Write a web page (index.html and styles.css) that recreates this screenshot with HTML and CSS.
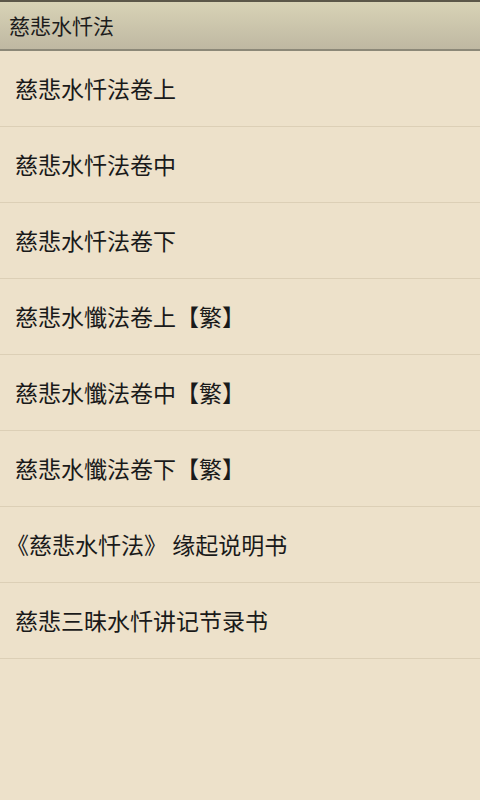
FILE: index.html
```html
<!DOCTYPE html>
<html>
	<head>
		<title>慈悲水忏法</title>
		<link rel="stylesheet" href="styles.css">
	</head>
	<body>
		<div class="titlebar">慈悲水忏法</div>
		<ul class="list">
			<li>慈悲水忏法卷上</li>
			<li>慈悲水忏法卷中</li>
			<li>慈悲水忏法卷下</li>
			<li>慈悲水懺法卷上【繁】</li>
			<li>慈悲水懺法卷中【繁】</li>
			<li>慈悲水懺法卷下【繁】</li>
			<li class="quote">《慈悲水忏法》 缘起说明书</li>
			<li>慈悲三昧水忏讲记节录书</li>
		</ul>
	</body>
</html>
```

FILE: styles.css
```css
body {
	margin: 0;
	height: 800px;
	background: #ede1ca;
	font-family: "Noto Sans CJK SC", "DejaVu Sans", sans-serif;
	color: #1a1a1a;
}

.titlebar {
	height: 47px;
	border-top: 2px solid #5b5749;
	border-bottom: 2px solid #8c8878;
	background: linear-gradient(#d8d3b6, #bfb8a2);
	padding-left: 9px;
	font-size: 21px;
	line-height: 46px;
	color: #1c1c1c;
}

.list {
	list-style: none;
	margin: 0;
	padding: 0;
}

.list li {
	height: 75px;
	line-height: 75px;
	border-bottom: 1px solid #dccfb6;
	padding-left: 15px;
	font-size: 23px;
}

.list li.quote {
	padding-left: 6px;
}
```
